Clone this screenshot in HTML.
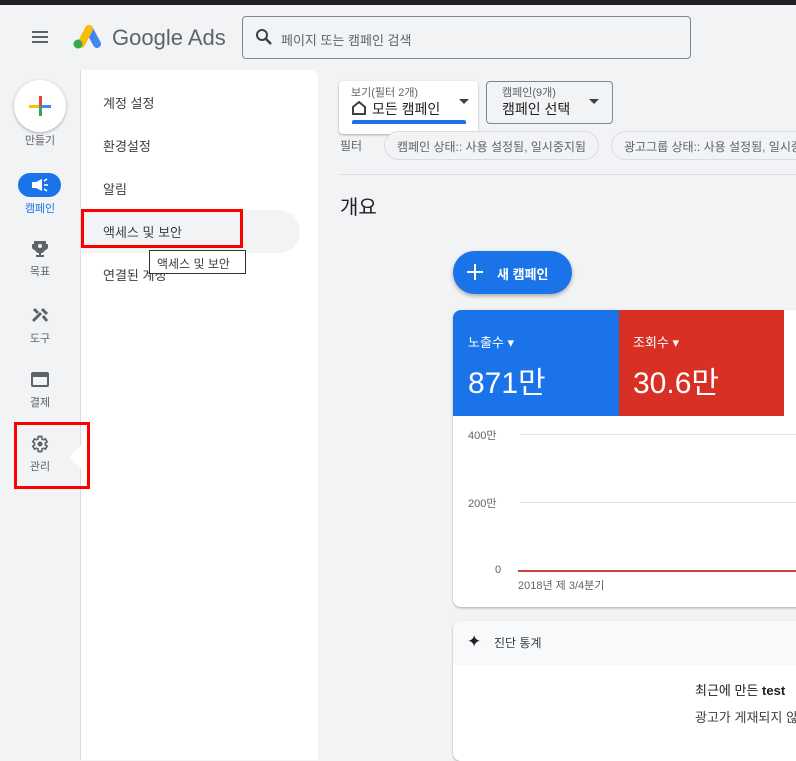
<!DOCTYPE html>
<html><head><meta charset="utf-8"><style>
*{box-sizing:border-box;margin:0;padding:0}
body{width:796px;height:748px;overflow:hidden;background:#f1f3f4;font-family:"Liberation Sans","Noto Sans CJK KR",sans-serif;color:#202124;position:relative}
.a{position:absolute}
.lbl{position:absolute;width:80px;text-align:center;font-size:11px;color:#5f6368}
.mi{position:absolute;left:103px;font-size:13px;color:#3c4043}
.chip{position:absolute;top:131px;height:29px;border:1px solid #dadce0;border-radius:15px;font-size:12px;color:#5f6368;padding:6px 12px;white-space:nowrap;background:#f1f3f4}
</style></head><body>
<div class="a" style="left:0;top:0;width:796px;height:5px;background:#202124"></div>
<div class="a" style="left:32px;top:31px;width:16px;height:2px;background:#5f6368;box-shadow:0 5px 0 #5f6368,0 10px 0 #5f6368"></div>
<svg class="a" style="left:72px;top:24px" width="30" height="26" viewBox="0 0 30 26">
<line x1="17" y1="5" x2="25" y2="20" stroke="#4285f4" stroke-width="8" stroke-linecap="round"/>
<line x1="17" y1="5" x2="9" y2="20" stroke="#fbbc04" stroke-width="8" stroke-linecap="round"/>
<circle cx="6" cy="20" r="4.5" fill="#34a853"/>
</svg>
<div class="a" style="left:112px;top:25px;font-size:22px;color:#5f6368">Google Ads</div>
<div class="a" style="left:242px;top:16px;width:449px;height:43px;border:1px solid #80868b;border-radius:4px"></div>
<svg class="a" style="left:255px;top:28px" width="18" height="18" viewBox="0 0 18 18"><circle cx="7" cy="7" r="5" fill="none" stroke="#3c4043" stroke-width="2"/><line x1="11" y1="11" x2="16" y2="16" stroke="#3c4043" stroke-width="2.4"/></svg>
<div class="a" style="left:281px;top:30px;font-size:13px;color:#5f6368">페이지 또는 캠페인 검색</div>
<div class="a" style="left:14px;top:80px;width:52px;height:52px;border-radius:50%;background:#fff;box-shadow:0 1px 3px rgba(0,0,0,.3)"></div>
<div class="a" style="left:39px;top:96px;width:3px;height:10px;background:#ea4335"></div>
<div class="a" style="left:39px;top:106px;width:3px;height:10px;background:#34a853"></div>
<div class="a" style="left:29px;top:105px;width:10px;height:3px;background:#fbbc04"></div>
<div class="a" style="left:41px;top:105px;width:10px;height:3px;background:#4285f4"></div>
<div class="lbl" style="top:132px">만들기</div>
<div class="a" style="left:18px;top:173px;width:43px;height:24px;border-radius:12px;background:#1a73e8"></div>
<svg class="a" style="left:30px;top:178px" width="20" height="14" viewBox="0 0 20 14"><path d="M2 4h4l6-3v12l-6-3H2z" fill="#fff"/><path d="M14 3l3-2M14 7h4M14 11l3 2" stroke="#fff" stroke-width="1.6"/></svg>
<div class="lbl" style="top:200px;color:#1a73e8">캠페인</div>
<svg class="a" style="left:30px;top:239px" width="20" height="20" viewBox="0 0 20 20"><path d="M4 2h12v3h2v3c0 2-2 3-3 3-1 2-2 3-4 3v2h3v2H6v-2h3v-2c-2 0-3-1-4-3-1 0-3-1-3-3V5h2z" fill="#5f6368"/><circle cx="10" cy="7" r="2" fill="#f1f3f4"/></svg>
<div class="lbl" style="top:263px">목표</div>
<svg class="a" style="left:30px;top:306px" width="20" height="18" viewBox="0 0 20 18"><path d="M3 15l8-8M4 3l4 4M12 3l5 5M13 10l4 5" stroke="#5f6368" stroke-width="3"/></svg>
<div class="lbl" style="top:330px">도구</div>
<div class="a" style="left:31px;top:372px;width:18px;height:15px;border:2px solid #5f6368;border-radius:2px;border-top-width:5px"></div>
<div class="lbl" style="top:394px">결제</div>
<svg class="a" style="left:30px;top:434px" width="20" height="20" viewBox="0 0 24 24"><path d="M19.4 13a7.5 7.5 0 0 0 0-2l2.1-1.6-2-3.5-2.5 1a7 7 0 0 0-1.7-1L15 3h-4l-.4 2.9a7 7 0 0 0-1.7 1l-2.5-1-2 3.5L6.5 11a7.5 7.5 0 0 0 0 2l-2.1 1.6 2 3.5 2.5-1c.5.4 1.1.8 1.7 1L11 21h4l.4-2.9c.6-.2 1.2-.6 1.7-1l2.5 1 2-3.5z" fill="none" stroke="#5f6368" stroke-width="2" transform="translate(-1 0)"/><circle cx="12" cy="12" r="3" fill="#5f6368"/></svg>
<div class="lbl" style="top:458px">관리</div>
<div class="a" style="left:80px;top:70px;width:238px;height:690px;background:#fff;border-radius:0 8px 0 0;border-left:1px solid #dadce0"></div>
<div class="a" style="left:69px;top:445px;width:0;height:0;border-top:12px solid transparent;border-bottom:12px solid transparent;border-right:12px solid #fff"></div>
<div class="a" style="left:14px;top:422px;width:76px;height:67px;border:3px solid #f00"></div>
<div class="a" style="left:82px;top:210px;width:218px;height:43px;background:#f1f3f4;border-radius:0 22px 22px 0"></div>
<div class="mi" style="top:93px">계정 설정</div>
<div class="mi" style="top:136px">환경설정</div>
<div class="mi" style="top:179px">알림</div>
<div class="mi" style="top:222px">액세스 및 보안</div>
<div class="mi" style="top:265px">연결된 계정</div>
<div class="a" style="left:81px;top:209px;width:162px;height:39px;border:3px solid #f00"></div>
<div class="a" style="left:149px;top:250px;width:97px;height:24px;background:#fff;border:1px solid #333;font-size:12px;color:#3c4043;padding:4px 7px">액세스 및 보안</div>
<div class="a" style="left:339px;top:81px;width:139px;height:53px;background:#fff;border-radius:4px;box-shadow:0 1px 2px rgba(0,0,0,.3)"></div>
<div class="a" style="left:351px;top:84px;font-size:11px;color:#5f6368">보기(필터 2개)</div>
<svg class="a" style="left:352px;top:101px" width="14" height="14" viewBox="0 0 14 14"><path d="M1 6L7 1l6 5v7H1z" fill="none" stroke="#3c4043" stroke-width="2"/></svg>
<div class="a" style="left:372px;top:99px;font-size:14px">모든 캠페인</div>
<div class="a" style="left:459px;top:99px;border-left:5px solid transparent;border-right:5px solid transparent;border-top:5px solid #3c4043"></div>
<div class="a" style="left:352px;top:120px;width:114px;height:4px;background:#1a73e8;border-radius:2px 2px 0 0"></div>
<div class="a" style="left:486px;top:81px;width:127px;height:43px;border:1px solid #80868b;border-radius:4px"></div>
<div class="a" style="left:502px;top:84px;font-size:11px;color:#5f6368">캠페인(9개)</div>
<div class="a" style="left:502px;top:99px;font-size:14px">캠페인 선택</div>
<div class="a" style="left:589px;top:99px;border-left:5px solid transparent;border-right:5px solid transparent;border-top:5px solid #3c4043"></div>
<div class="a" style="left:340px;top:137px;font-size:12px;color:#5f6368">필터</div>
<div class="chip" style="left:384px">캠페인 상태:: 사용 설정됨, 일시중지됨</div>
<div class="chip" style="left:611px">광고그룹 상태:: 사용 설정됨, 일시중지됨</div>
<div class="a" style="left:339px;top:174px;width:457px;height:1px;background:#dadce0"></div>
<div class="a" style="left:340px;top:191px;font-size:20px">개요</div>
<div class="a" style="left:453px;top:251px;width:119px;height:43px;border-radius:22px;background:#1a73e8;box-shadow:0 2px 4px rgba(0,0,0,.3)"></div>
<div class="a" style="left:467px;top:271px;width:16px;height:2px;background:#fff"></div>
<div class="a" style="left:474px;top:264px;width:2px;height:16px;background:#fff"></div>
<div class="a" style="left:497px;top:264px;font-size:13px;color:#fff;font-weight:bold">새 캠페인</div>
<div class="a" style="left:453px;top:310px;width:360px;height:297px;background:#fff;border-radius:8px;box-shadow:0 1px 2px rgba(0,0,0,.3);overflow:hidden">
 <div class="a" style="left:0;top:0;width:166px;height:106px;background:#1a73e8"></div>
 <div class="a" style="left:166px;top:0;width:165px;height:106px;background:#d93025"></div>
 <div class="a" style="left:15px;top:22px;font-size:13px;color:#fff">노출수 ▾</div>
 <div class="a" style="left:15px;top:48px;font-size:30px;color:#fff">871만</div>
 <div class="a" style="left:180px;top:22px;font-size:13px;color:#fff">조회수 ▾</div>
 <div class="a" style="left:180px;top:48px;font-size:30px;color:#fff">30.6만</div>
 <div class="a" style="left:15px;top:117px;font-size:11px;color:#5f6368">400만</div>
 <div class="a" style="left:67px;top:124px;width:300px;height:1px;background:#e0e0e0"></div>
 <div class="a" style="left:15px;top:185px;font-size:11px;color:#5f6368">200만</div>
 <div class="a" style="left:67px;top:192px;width:300px;height:1px;background:#e0e0e0"></div>
 <div class="a" style="left:42px;top:254px;font-size:11px;color:#5f6368">0</div>
 <div class="a" style="left:67px;top:260px;width:300px;height:1px;background:#e0e0e0"></div>
 <div class="a" style="left:65px;top:260px;width:300px;height:2px;background:#c5433f"></div>
 <div class="a" style="left:65px;top:267px;font-size:11px;color:#5f6368">2018년 제 3/4분기</div>
</div>
<div class="a" style="left:453px;top:621px;width:360px;height:140px;background:#fff;border-radius:8px;box-shadow:0 1px 2px rgba(0,0,0,.3);overflow:hidden">
 <div class="a" style="left:0;top:0;width:360px;height:44px;background:#f8f9fa"></div>
 <div class="a" style="left:14px;top:11px;font-size:17px;color:#202124">✦</div>
 <div class="a" style="left:41px;top:13px;font-size:12px;color:#3c4043">진단 통계</div>
 <div class="a" style="left:242px;top:59px;font-size:13px;color:#202124;white-space:nowrap">최근에 만든 <b>test</b></div>
 <div class="a" style="left:242px;top:86px;font-size:13px;color:#3c4043;white-space:nowrap">광고가 게재되지 않</div>
</div>
</body></html>
